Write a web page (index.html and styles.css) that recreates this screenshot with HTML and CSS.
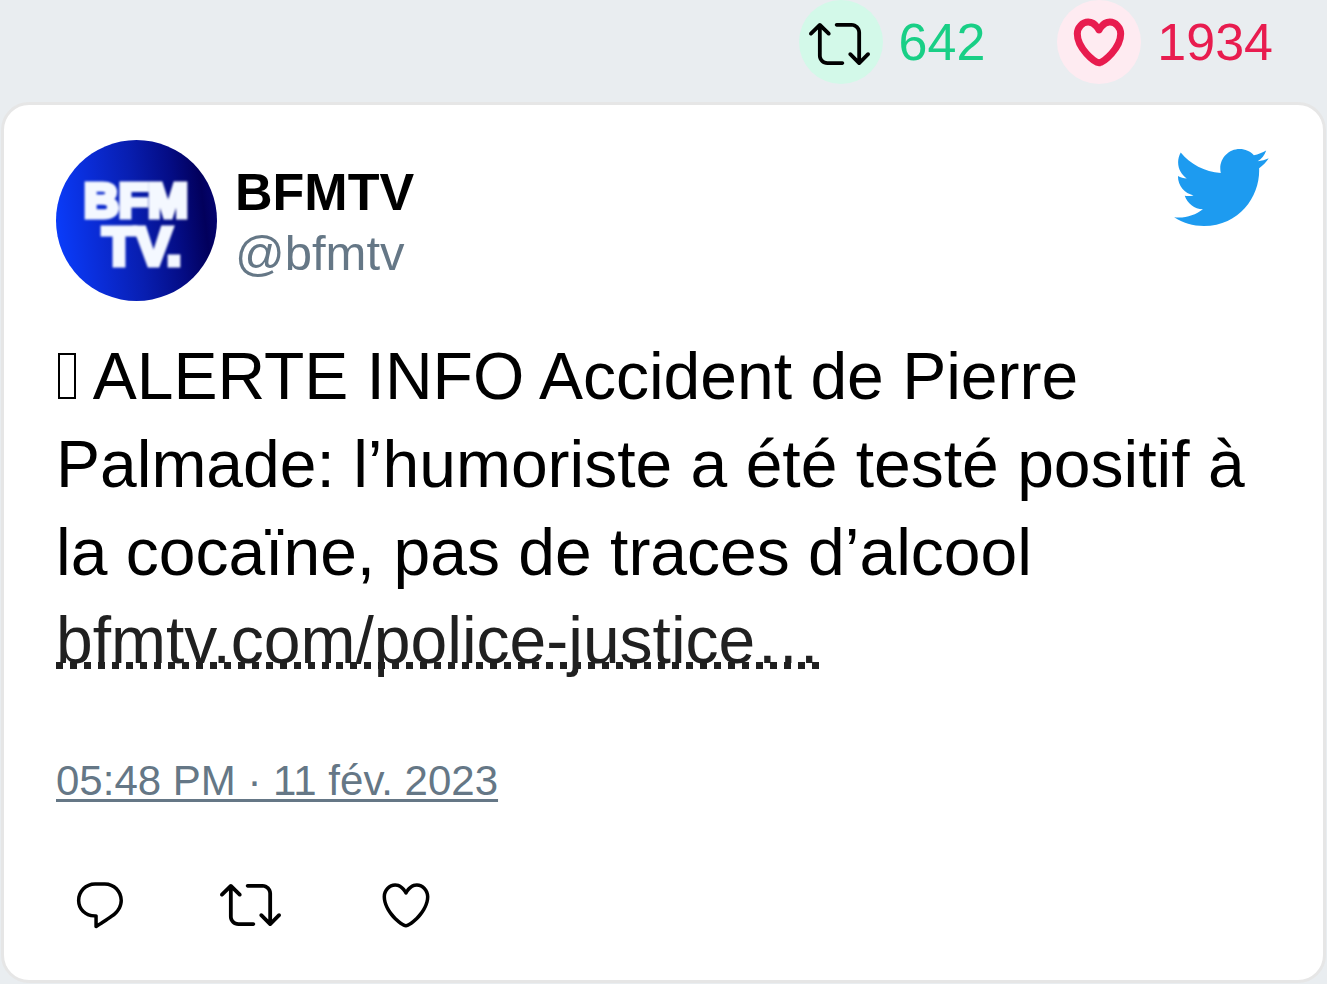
FILE: index.html
```html
<!DOCTYPE html>
<html lang="fr">
<head>
<meta charset="utf-8">
<title>BFMTV</title>
<link rel="stylesheet" href="styles.css">
</head>
<body>
<svg class="defs" aria-hidden="true">
  <symbol id="retweet" viewBox="0 0 24 24"><path d="M23.77 15.67c-.292-.293-.767-.293-1.06 0l-2.22 2.22V7.65c0-2.068-1.683-3.75-3.75-3.75h-5.85c-.414 0-.75.336-.75.75s.336.75.75.75h5.85c1.24 0 2.25 1.01 2.25 2.25v10.24l-2.22-2.22c-.293-.293-.768-.293-1.06 0s-.294.768 0 1.06l3.5 3.5c.145.147.337.22.53.22s.383-.072.53-.22l3.5-3.5c.294-.292.294-.767 0-1.06zm-10.66 3.28H7.26c-1.24 0-2.25-1.01-2.25-2.25V6.46l2.22 2.22c.148.147.34.22.532.22s.384-.073.53-.22c.293-.293.293-.768 0-1.06l-3.5-3.5c-.293-.294-.768-.294-1.06 0l-3.5 3.5c-.294.292-.294.767 0 1.06s.767.293 1.06 0l2.22-2.22V16.7c0 2.068 1.683 3.75 3.75 3.75h5.85c.414 0 .75-.336.75-.75s-.337-.75-.75-.75z"/></symbol>
  <symbol id="heart" viewBox="0 0 24 24"><path d="M12 21.638h-.014C9.403 21.59 1.95 14.856 1.95 8.478c0-3.064 2.525-5.754 5.403-5.754 2.29 0 3.83 1.58 4.646 2.73.814-1.148 2.354-2.73 4.645-2.73 2.88 0 5.404 2.69 5.404 5.755 0 6.376-7.454 13.11-10.037 13.157H12zM7.354 4.225c-2.08 0-3.903 1.988-3.903 4.255 0 5.74 7.034 11.596 8.55 11.658 1.518-.062 8.55-5.917 8.55-11.658 0-2.267-1.823-4.255-3.903-4.255-2.528 0-3.94 2.936-3.952 2.965-.23.562-1.156.562-1.387 0-.014-.03-1.425-2.965-3.954-2.965z"/></symbol>
</svg>

<div class="stats">
  <div class="stat stat-retweets">
    <span class="badge"><svg class="icon-retweet" aria-hidden="true"><use href="#retweet"/></svg></span>
    <span>642</span>
  </div>
  <div class="stat stat-likes">
    <span class="badge"><svg class="icon" aria-hidden="true"><use href="#heart"/></svg></span>
    <span>1934</span>
  </div>
</div>

<article class="card">
  <header class="head">
    <svg class="avatar" viewBox="0 0 161 161" role="img" aria-label="BFMTV">
      <defs>
        <linearGradient id="blue" x1="0" y1="0.56" x2="1" y2="0.44">
          <stop offset="0" stop-color="#0a3cfa"/>
          <stop offset="0.25" stop-color="#0a2cd6"/>
          <stop offset="0.5" stop-color="#081eb0"/>
          <stop offset="0.75" stop-color="#040c84"/>
          <stop offset="0.92" stop-color="#02005c"/>
          <stop offset="1" stop-color="#040470"/>
        </linearGradient>
      </defs>
      <circle cx="80.500" cy="80.500" r="80.500" fill="url(#blue)"/>
      <text class="logo"><tspan x="80" y="77" font-size="48">BFM</tspan><tspan x="86" y="125" font-size="54">TV.</tspan></text>
    </svg>
    <div class="author">
      <strong class="name">BFMTV</strong>
      <span class="handle">@bfmtv</span>
    </div>
    <svg class="bird" viewBox="0.94 2.74 22.71 18.47" role="img" aria-label="Twitter"><path d="M23.643 4.937c-.835.37-1.732.62-2.675.733.962-.576 1.7-1.49 2.048-2.578-.9.534-1.897.922-2.958 1.13-.85-.904-2.06-1.47-3.4-1.47-2.572 0-4.658 2.086-4.658 4.66 0 .364.042.718.12 1.06-3.873-.195-7.304-2.05-9.602-4.868-.4.69-.63 1.49-.63 2.342 0 1.616.823 3.043 2.072 3.878-.764-.025-1.482-.234-2.11-.583v.06c0 2.257 1.605 4.14 3.737 4.568-.392.106-.803.162-1.227.162-.3 0-.593-.028-.877-.082.593 1.85 2.313 3.198 4.352 3.234-1.595 1.25-3.604 1.995-5.786 1.995-.376 0-.747-.022-1.112-.065 2.062 1.323 4.51 2.093 7.14 2.093 8.57 0 13.255-7.098 13.255-13.254 0-.2-.005-.402-.014-.602.91-.658 1.7-1.477 2.323-2.41z"/></svg>
  </header>

  <p class="message"><span class="glyph-box" role="img" aria-label="Alerte"></span> ALERTE INFO Accident de Pierre Palmade: l’humoriste a été testé positif à la cocaïne, pas de traces d’alcool <a class="link" href="#">bfmtv.com/police-justice…</a></p>

  <a class="date" href="#">05:48 PM · 11 fév. 2023</a>

  <div class="actions">
    <button type="button" aria-label="Répondre"><svg class="icon" viewBox="0 0 24 24"><path d="M14.046 2.242l-4.148-.01h-.002c-4.374 0-7.8 3.427-7.8 7.802 0 4.098 3.186 7.206 7.465 7.37v3.828c0 .108.044.286.12.403.142.225.384.347.632.347.138 0 .277-.038.402-.118.264-.168 6.473-4.14 8.088-5.506 1.902-1.61 3.04-3.97 3.043-6.312v-.017c-.006-4.367-3.43-7.787-7.8-7.788zm3.787 12.972c-1.134.96-4.862 3.405-6.772 4.643V16.67c0-.414-.335-.75-.75-.75h-.396c-3.66 0-6.318-2.476-6.318-5.886 0-3.534 2.768-6.302 6.3-6.302l4.147.01h.002c3.532 0 6.3 2.766 6.302 6.296-.003 1.91-.942 3.844-2.514 5.176z"/></svg></button>
    <button type="button" aria-label="Retweeter"><svg class="icon-retweet"><use href="#retweet"/></svg></button>
    <button type="button" aria-label="Aimer"><svg class="icon"><use href="#heart"/></svg></button>
  </div>
</article>
</body>
</html>
```
FILE: styles.css
```css
* {
  box-sizing: border-box;
}

body {
  margin: 0;
  padding: 0 1px 1px;
  background: #e9edf0;
  color: #000;
  font-family: "Liberation Sans", Arial, sans-serif;
}

svg {
  display: block;
  flex: none;
}

.defs {
  position: absolute;
  width: 0;
  height: 0;
}

.icon {
  width: 56px;
  height: 56px;
}

.icon-retweet {
  width: 61px;
  height: 61px;
}

.stats {
  display: flex;
  justify-content: flex-end;
  gap: 72px;
  padding-right: 53px;
  margin-bottom: 18px;
  font-size: 52px;
}

.stat {
  display: flex;
  align-items: center;
  gap: 16px;
}

.badge {
  display: flex;
  align-items: center;
  justify-content: center;
  width: 84px;
  height: 84px;
  border-radius: 50%;
}

.stat-retweets {
  color: #19cf86;
}

.stat-retweets .badge {
  padding: 3px 3px 0 0;
  background: #d3f9e9;
}

.stat-likes {
  color: #e81c4f;
}

.stat-likes .badge {
  background: #feebf1;
}

.stat-likes .icon {
  fill: #e81c4f;
  stroke: #e81c4f;
  stroke-width: 1.5;
  overflow: visible;
}

.card {
  padding: 35px 52px 45px;
  border: 3px solid #e6e6e6;
  border-radius: 28px;
  background: #fff;
}

.head {
  display: flex;
  align-items: flex-start;
  gap: 18px;
  padding-right: 2px;
}

.avatar {
  width: 161px;
  height: 161px;
}

.logo {
  fill: #f4f8ff;
  stroke: #f4f8ff;
  stroke-width: 5px;
  font-weight: bold;
  text-anchor: middle;
  filter: blur(1px);
}

.author {
  flex: 1;
  display: flex;
  flex-direction: column;
  align-self: center;
  padding-top: 4px;
  line-height: 61px;
}

.name {
  font-size: 52px;
}

.handle {
  font-size: 49px;
  color: #657786;
}

.bird {
  width: 95px;
  height: 77px;
  margin-top: 9px;
  fill: #1d9bf0;
}

.message {
  margin: 31px 0 73px;
  font-size: 66px;
  line-height: 88px;
}

.glyph-box {
  display: inline-block;
  width: 18px;
  height: 46px;
  margin: 0 2px;
  border: 2px solid #000;
}

.link {
  color: #202020;
  text-decoration: none;
  background: repeating-linear-gradient(90deg, #202020 0 7px, transparent 7px 14px) 0 calc(100% - 8px) / 100% 7px no-repeat;
}

.date {
  display: inline-block;
  color: #657786;
  font-size: 42px;
  line-height: 48px;
  text-decoration-thickness: 3px;
  text-underline-offset: 4px;
}

.actions {
  display: grid;
  grid-template-columns: 148px 158px auto;
  align-items: center;
  margin-top: 69px;
  padding-left: 16px;
}

.actions button {
  justify-self: start;
  padding: 0;
  border: 0;
  background: none;
  cursor: pointer;
}
```
